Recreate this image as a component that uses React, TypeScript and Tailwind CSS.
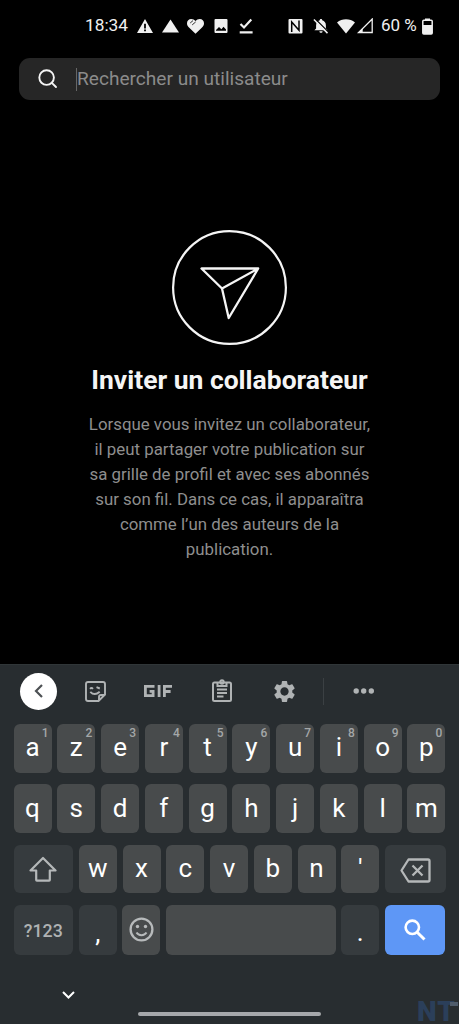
import type { ReactNode } from "react";
import clsx from "clsx";

const TOP_ROW = ["a", "z", "e", "r", "t", "y", "u", "i", "o", "p"];
const HOME_ROW = ["q", "s", "d", "f", "g", "h", "j", "k", "l", "m"];
const BOTTOM_ROW = ["w", "x", "c", "v", "b", "n", "'"];

const DESCRIPTION = [
  "Lorsque vous invitez un collaborateur,",
  "il peut partager votre publication sur",
  "sa grille de profil et avec ses abonnés",
  "sur son fil. Dans ce cas, il apparaîtra",
  "comme l’un des auteurs de la",
  "publication.",
];

interface KeyProps {
  label?: string;
  hint?: string;
  className?: string;
  children?: ReactNode;
}

function Key({ label, hint, className, children }: KeyProps) {
  return (
    <button
      className={clsx(
        "relative flex h-full items-center justify-center rounded-[6px] text-[26px] leading-none text-white",
        className ?? "w-[38px] bg-[#484b4c]",
      )}
    >
      {label && <span className="-mt-[2px]">{label}</span>}
      {hint && (
        <span className="absolute right-[3px] top-[3px] text-[12px] font-medium leading-none text-[#a4a7a8]">
          {hint}
        </span>
      )}
      {children}
    </button>
  );
}

function StatusBar() {
  return (
    <header className="flex h-[52px] items-center pl-[85px] text-[17.3px] text-[#f0f0f0]">
      <span className="w-[52px] whitespace-nowrap">18:34</span>
      <svg className="h-4 w-4 shrink-0" viewBox="0 0 16 16" fill="currentColor">
        <path fillRule="evenodd" d="M8 1 16 15H0ZM7.1 5.8v4.6h1.8V5.8ZM7.1 11.5v1.8h1.8v-1.8Z" />
      </svg>
      <svg className="ml-[9px] h-4 w-[17px] shrink-0" viewBox="0 0 17 16" fill="currentColor">
        <path d="M8.5 1.5 17 14.500H0Z" />
      </svg>
      <svg className="ml-2 h-4 w-[17px] shrink-0" viewBox="0 0 17 16" fill="currentColor">
        <path d="M8.5 15.8 2 9.4C.6 8 0 6.8 0 5.2 0 2.8 1.8 1 4.2 1 6 1 7.400 1.700 8.500 3 9.600 1.700 11 1 12.800 1 15.200 1 17 2.800 17 5.200c0 1.600-.6 2.800-2 4.200Z" />
        <path d="M3.200 5 6 2.600M5.200 6.900 8.700 3.900" stroke="#000" strokeWidth=".8" />
      </svg>
      <svg className="ml-[10px] h-4 w-[14px] shrink-0" viewBox="0 0 14 16" fill="currentColor">
        <path fillRule="evenodd" d="M1.500 1h11q1 0 1 1v12q0 1-1 1h-11q-1 0-1-1V2q0-1 1-1ZM2 12.800h10V11.500L9.500 8.800 7.400 11.200 5 9 2 12Z" />
      </svg>
      <svg className="ml-[11px] h-4 w-[14px] shrink-0" viewBox="0 0 14 16" fill="none" stroke="currentColor" strokeWidth="2.200">
        <path d="M1.500 6 5 9.500 12.300 1.600M.7 14.300H13.600" />
      </svg>

      <svg className="ml-[35px] h-4 w-[15px] shrink-0" viewBox="0 0 14 16" fill="none">
        <rect y="1" width="14" height="14.500" rx="1" fill="currentColor" />
        <path d="M3 13.500V3.500H4.500L9.700 9.500V2.800M4.500 7V13H11V3" stroke="none" />
        <path d="M3.200 14V4L10.500 12.200V2.500" stroke="#000" strokeWidth="1.500" />
      </svg>
      <svg className="ml-[10px] h-4 w-4 shrink-0" viewBox="0 0 16 16" fill="currentColor">
        <path d="M8 1c.8 0 1.200.5 1.200 1.300C11.600 3 12.900 4.900 12.900 7.400v3.200l1.700 1.700H1.400l1.700-1.700V7.400C3.100 4.900 4.500 3 6.800 2.300 6.800 1.500 7.200 1 8 1ZM6.400 13.200h3.200c0 1-.7 1.600-1.600 1.600s-1.600-.6-1.600-1.600Z" />
        <path d="M2.300 1 15.600 14.200" stroke="#000" strokeWidth="1.200" />
        <path d="M.9 1.500 14.500 15.100" stroke="currentColor" strokeWidth="1.500" />
      </svg>
      <svg className="ml-[8px] h-4 w-[18px] shrink-0" viewBox="0 0 18 16" fill="currentColor">
        <path d="M0 4.500C5 .3 13 .3 18 4.500L9 15.500Z" />
      </svg>
      <svg className="ml-[2px] h-4 w-4 shrink-0" viewBox="0 0 16 16" fill="currentColor">
        <path d="M1.600 14.500H15.200V1Z" fill="none" stroke="currentColor" strokeWidth="1.300" />
        <path d="M.5 15 5.700 10v5Z" />
      </svg>
      <span className="ml-[8px] w-[41px] whitespace-nowrap text-[17px]">60 %</span>
      <svg className="h-[17px] w-[11px] shrink-0" viewBox="0 0 11 17">
        <path d="M3 2V.5h5V2" fill="currentColor" />
        <rect x=".8" y="2.300" width="9.400" height="13.700" rx="1" fill="none" stroke="currentColor" strokeWidth="1.500" />
        <path d="M1 7h9v9H1Z" fill="currentColor" />
      </svg>
    </header>
  );
}

function SearchField() {
  return (
    <div className="mx-[19px] mt-[6px] flex h-[42px] items-center rounded-[11px] bg-[#262626]">
      <svg className="ml-[19px] size-[20px]" viewBox="0 0 20 20" fill="none" stroke="#f4f4f4" strokeWidth="1.900">
        <circle cx="8.600" cy="8.600" r="7.300" />
        <path d="m13.800 13.800 4.200 4.200" strokeLinecap="round" />
      </svg>
      <span className="ml-[18px] h-[23px] w-px bg-[#666]" />
      <span className="whitespace-nowrap text-[19.100px] text-[#8b8b8b]">Rechercher un utilisateur</span>
    </div>
  );
}

function EmptyState() {
  return (
    <main className="flex flex-col items-center pt-[130px]">
      <svg className="size-[116px]" viewBox="0 0 116 116" fill="none" stroke="#f5f5f5">
        <circle cx="57.500" cy="57.500" r="56.400" strokeWidth="2.200" />
        <path d="M29.500 38.500H86.200L56.700 88 50 58.500ZM50 58.500 86.200 38.500" strokeWidth="2.300" strokeLinejoin="round" />
      </svg>
      <h1 className="mt-[17px] whitespace-nowrap text-[26.450px] font-bold leading-[34px] text-[#f5f5f5]">
        Inviter un collaborateur
      </h1>
      <p className="mt-[15px] text-center text-[16.850px] leading-[25.100px] text-[#8e8e8e]">
        {DESCRIPTION.map((line) => (
          <span key={line} className="block whitespace-nowrap">{line}</span>
        ))}
      </p>
    </main>
  );
}

function Toolbar() {
  return (
    <div className="flex h-[52px] items-center text-[#b0b3b4]">
      <button className="ml-[20px] flex size-[37px] items-center justify-center rounded-full bg-white text-[#4d5154]">
        <svg className="size-[16px]" viewBox="0 0 16 16" fill="none" stroke="currentColor" strokeWidth="2.200">
          <path d="M11 2 5 8l6 6" />
        </svg>
      </button>
      {/* Stickers */}
      <svg className="ml-[28px] size-[21px]" viewBox="0 0 21 21" fill="none" stroke="currentColor" strokeWidth="1.900">
        <path d="M3 1h15q2 0 2 2v10.500L13.500 20H3q-2 0-2-2V3q0-2 2-2ZM19.800 14H16q-2 0-2 2v3.800" />
        <path d="M5.300 10.800q4.200 4.600 9.400 0" />
        <path d="M5 7.800q1.500-1.500 3 0M11.500 6.200l3.300 1.300" />
      </svg>
      {/* GIF */}
      <svg className="ml-[38px] h-[12px] w-[28px]" viewBox="0 0 28 12" fill="none" stroke="currentColor" strokeWidth="2.800">
        <path d="M10.500 1.400H1.400v9.200h7.700V6.300H5.600M15.100 0v12M20.400 12V1.400H28M20.400 6.500h6.200" />
      </svg>
      {/* Clipboard */}
      <svg className="ml-[40px] h-[24px] w-[20px]" viewBox="0 0 20 24" fill="none" stroke="currentColor" strokeWidth="2">
        <rect x="1" y="3.500" width="18" height="18.500" rx="1.500" />
        <path d="M5.500 3.500V7h9V3.500" />
        <circle cx="10" cy="3" r="1.700" />
        <path d="M5 10.500h10M5 14h10M5 17.500h6.500" />
      </svg>
      {/* Settings */}
      <svg className="ml-[40px] size-[25px]" viewBox="0 0 24 24" fill="currentColor">
        <path d="M19.430 12.980c.040-.320.070-.640.070-.980s-.030-.660-.070-.980l2.110-1.650c.190-.150.240-.420.120-.640l-2-3.460c-.120-.220-.390-.300-.610-.220l-2.490 1c-.520-.400-1.080-.730-1.690-.980l-.380-2.650C14.460 2.180 14.250 2 14 2h-4c-.250 0-.460.180-.490.420l-.380 2.650c-.610.250-1.170.590-1.690.980l-2.490-1c-.230-.090-.490 0-.610.220l-2 3.460c-.130.220-.070.490.120.640l2.110 1.650c-.040.320-.070.650-.070.980s.030.660.070.980l-2.110 1.650c-.190.150-.240.420-.120.640l2 3.460c.120.220.390.300.610.220l2.490-1c.520.400 1.080.730 1.690.980l.380 2.650c.030.240.240.420.490.420h4c.250 0 .460-.180.490-.420l.380-2.650c.610-.250 1.170-.590 1.690-.980l2.490 1c.230.090.490 0 .610-.220l2-3.460c.120-.220.070-.490-.120-.640l-2.110-1.650zM12 16c-2.200 0-4-1.800-4-4s1.800-4 4-4 4 1.800 4 4-1.800 4-4 4z" />
      </svg>
      <span className="ml-[26px] h-[27px] w-px bg-[#3b4043]" />
      <svg className="ml-[29px] h-[6px] w-[22px]" viewBox="0 0 22 6" fill="currentColor">
        <circle cx="3.200" cy="3" r="2.700" />
        <circle cx="10.700" cy="3" r="2.700" />
        <circle cx="18.300" cy="3" r="2.700" />
      </svg>
    </div>
  );
}

function Keyboard() {
  return (
    <section className="flex h-[360px] flex-col border-t border-[#303638] bg-[#282d30]">
      <Toolbar />
      <div className="mx-auto mt-[7px] flex w-[432px] flex-col gap-[11.600px]">
        <div className="flex h-[48.700px] justify-between">
          {TOP_ROW.map((letter, i) => (
            <Key key={letter} label={letter} hint={String((i + 1) % 10)} />
          ))}
        </div>
        <div className="flex h-[48.700px] justify-between">
          {HOME_ROW.map((letter) => (
            <Key key={letter} label={letter} />
          ))}
        </div>
        <div className="flex h-[48.700px] justify-between">
          <Key className="w-[59.500px] bg-[#363b3e]">
            <svg className="h-[26px] w-[28px]" viewBox="0 0 28 26" fill="none" stroke="#b5b8b9" strokeWidth="2.200" strokeLinejoin="round">
              <path d="M14 2 26.500 14.500H20.800V24q0 .7-.7.700H7.900q-.7 0-.7-.7v-9.500H1.500Z" />
            </svg>
          </Key>
          {BOTTOM_ROW.map((letter) => (
            <Key key={letter} label={letter} />
          ))}
          <Key className="w-[60.500px] bg-[#363b3e]">
            <svg className="mt-[3px] h-[25px] w-[31px]" viewBox="0 0 31 25" fill="none" stroke="#b5b8b9" strokeWidth="2.300" strokeLinejoin="round">
              <path d="M8.500 1.500H28q1.500 0 1.500 1.500v19q0 1.500-1.500 1.500H8.500L1.500 12.500Z" />
              <path d="m12.500 7.500 10 10M22.500 7.500l-10 10" />
            </svg>
          </Key>
        </div>
        <div className="flex h-[49.700px] justify-between">
          <Key className="w-[59.500px] bg-[#363b3e]">
            <span className="mt-[2px] text-[17.800px] font-medium text-[#afb2b3]">?123</span>
          </Key>
          <Key className="w-[38px] bg-[#363b3e]">
            <span className="mt-[7px]">,</span>
          </Key>
          <Key>
            <svg className="size-[25px]" viewBox="0 0 25 25" fill="none" stroke="#b7babb" strokeWidth="2.300">
              <circle cx="12.500" cy="12.500" r="10.900" />
              <path d="M7.500 15.500c2 3.500 8 3.500 10 0" strokeWidth="2" />
              <circle cx="8.500" cy="9.500" r="1.700" fill="#b7babb" stroke="none" />
              <circle cx="16.500" cy="9.500" r="1.700" fill="#b7babb" stroke="none" />
            </svg>
          </Key>
          <Key className="w-[169.500px] bg-[#484b4c]" />
          <Key className="w-[38px] bg-[#363b3e]">
            <span className="mt-[5px]">.</span>
          </Key>
          <Key className="w-[60.500px] bg-[#5e97f6]">
            <svg className="size-[22px]" viewBox="0 0 22 22" fill="none" stroke="#fff" strokeWidth="2.600">
              <circle cx="8.300" cy="8.300" r="6.700" />
              <path d="m13.200 13.200 7.300 7.300" strokeWidth="3" />
            </svg>
          </Key>
        </div>
      </div>
      <div className="relative flex flex-1 items-start">
        <svg className="ml-[62px] mt-[36px] h-[8px] w-[13px]" viewBox="0 0 13 8" fill="none" stroke="#fff" strokeWidth="2">
          <path d="m1 1 5.500 5.500L12 1" />
        </svg>
        <span className="ml-[63px] mt-[57px] h-[4px] w-[183px] rounded-full bg-[#a6a8ab]" />
        <div className="absolute bottom-[-4px] right-[3px] text-[28px] font-black leading-[32px] tracking-[1px] text-[#2b3f5a]">
          NT
        </div>
        <span className="absolute bottom-[18px] right-[1px] h-[4px] w-[8px] bg-[#4f5c6b]" />
      </div>
    </section>
  );
}

export default function App() {
  return (
    <div className="flex h-[1024px] w-[459px] flex-col overflow-hidden bg-black font-['Roboto',sans-serif]">
      <StatusBar />
      <SearchField />
      <div className="flex-1">
        <EmptyState />
      </div>
      <Keyboard />
    </div>
  );
}
